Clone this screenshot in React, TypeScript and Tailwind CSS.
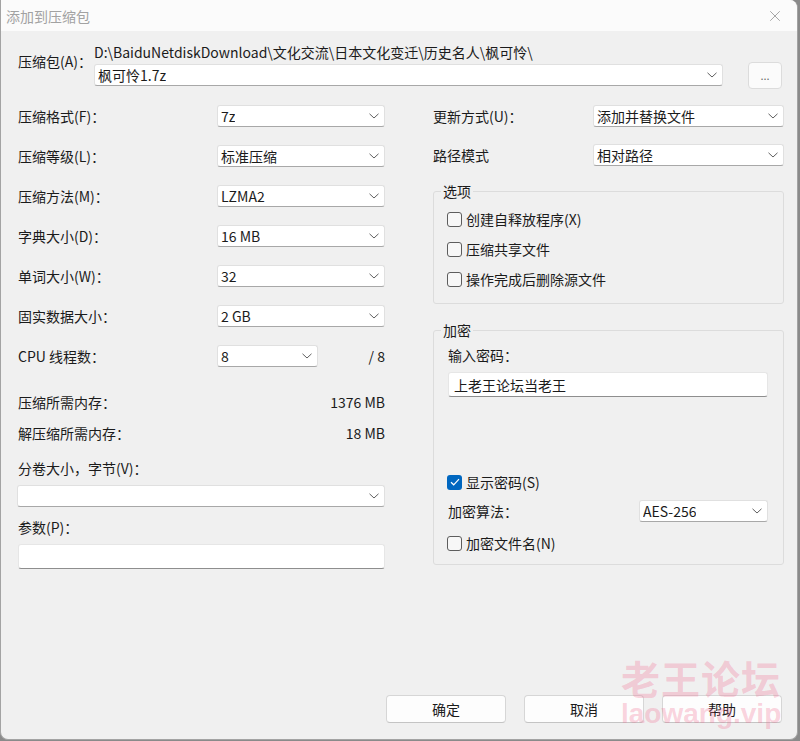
import { X } from "lucide-react";

const ff = "font-['Noto_Sans_CJK_SC','Liberation_Sans',sans-serif]";

function Chevron() {
  return (
    <svg width="10" height="6" viewBox="0 0 10 6" className="shrink-0">
      <path d="M0.5 0.8 L5 5 L9.5 0.8" fill="none" stroke="#5f5f5f" strokeWidth="1" />
    </svg>
  );
}

function Combo({ value, className = "" }: { value?: string; className?: string }) {
  return (
    <div
      className={`h-[22px] bg-white border border-[#e0e0e0] border-b-[#a8a8a8] rounded-[3px] flex items-center justify-between pl-[3px] pr-[5px] ${className}`}
    >
      <span className="text-[14px] leading-[20px] text-[#1b1b1b] truncate">{value}</span>
      <Chevron />
    </div>
  );
}

function Check({ label, checked = false }: { label: string; checked?: boolean }) {
  return (
    <div className="flex items-center h-[20px] gap-[4px]">
      {checked ? (
        <span className="w-[15px] h-[15px] rounded-[3px] bg-[#0067c0] flex items-center justify-center">
          <svg width="10" height="8" viewBox="0 0 10 8">
            <path d="M1 4.2 L3.7 6.8 L9 1.2" fill="none" stroke="white" strokeWidth="1.2" />
          </svg>
        </span>
      ) : (
        <span className="w-[15px] h-[15px] rounded-[3px] border border-[#5d5d5d] bg-[#f7f7f7]" />
      )}
      <span className="text-[14px] leading-[20px] text-[#1b1b1b]">{label}</span>
    </div>
  );
}

function Row({ label, value, labelW }: { label: string; value: string; labelW: string }) {
  return (
    <div className="flex items-center h-[22px]">
      <span className={`${labelW} shrink-0 text-[14px] leading-[20px] text-[#1b1b1b]`}>{label}</span>
      <Combo value={value} className="flex-1" />
    </div>
  );
}

function Btn({ label }: { label: string }) {
  return (
    <button className="w-[120px] h-[28px] bg-[#fdfdfd] border border-[#d6d6d6] border-b-[#c4c4c4] rounded-[4px] text-[14px] text-[#1b1b1b] flex items-center justify-center">
      {label}
    </button>
  );
}

export default function App() {
  return (
    <div className={`w-[800px] h-[741px] bg-[#8a8a8a] ${ff}`}>
      <div className="relative w-[798px] h-[740px] flex flex-col bg-[#f0f0f0] border-l border-r border-b border-[#a3a3a3] rounded-tr-[8px] rounded-b-[8px] overflow-hidden">
        {/* title bar */}
        <div className="h-[31px] bg-[#fbfbfb] flex items-center justify-between pl-[5px] pr-[13px] shrink-0">
          <span className="text-[14px] leading-[20px] text-[#a2a2a2]">添加到压缩包</span>
          <X size={18} strokeWidth={1} className="text-[#8a8a8a]" />
        </div>

        <div className="flex-1 flex flex-col">
          {/* archive */}
          <div className="flex pl-[17px] pt-[12px]">
            <span className="w-[76px] shrink-0 mt-[8px] text-[14px] leading-[20px] text-[#1b1b1b]">压缩包(A)：</span>
            <div className="flex flex-col">
              <span className="text-[14px] leading-[18px] text-[#1b1b1b]">D:\BaiduNetdiskDownload\文化交流\日本文化变迁\历史名人\枫可怜\</span>
              <div className="flex items-start mt-[3px]">
                <Combo value="枫可怜1.7z" className="w-[629px]" />
                <button className="ml-[25px] -mt-[2px] w-[34px] h-[27px] bg-[#fbfbfb] border border-[#dcdcdc] rounded-[4px] text-[11px] leading-none text-[#6a6a6a]">
                  ...
                </button>
              </div>
            </div>
          </div>

          {/* columns */}
          <div className="flex mt-[16px] pl-[17px]">
            {/* left */}
            <div className="w-[367px] flex flex-col">
              <div className="flex flex-col gap-[18px]">
                <Row label="压缩格式(F)：" value="7z" labelW="w-[199px]" />
                <Row label="压缩等级(L)：" value="标准压缩" labelW="w-[199px]" />
                <Row label="压缩方法(M)：" value="LZMA2" labelW="w-[199px]" />
                <Row label="字典大小(D)：" value="16 MB" labelW="w-[199px]" />
                <Row label="单词大小(W)：" value="32" labelW="w-[199px]" />
                <Row label="固实数据大小：" value="2 GB" labelW="w-[199px]" />
                <div className="flex items-center h-[22px]">
                  <span className="w-[199px] shrink-0 text-[14px] leading-[20px] text-[#1b1b1b]">CPU 线程数：</span>
                  <Combo value="8" className="w-[101px]" />
                  <span className="ml-auto text-[14px] leading-[20px] text-[#1b1b1b]">/ 8</span>
                </div>
              </div>
              <div className="flex justify-between mt-[25px] text-[14px] leading-[20px] text-[#1b1b1b]">
                <span>压缩所需内存：</span>
                <span>1376 MB</span>
              </div>
              <div className="flex justify-between mt-[11px] text-[14px] leading-[20px] text-[#1b1b1b]">
                <span>解压缩所需内存：</span>
                <span>18 MB</span>
              </div>
              <span className="mt-[15px] text-[14px] leading-[20px] text-[#1b1b1b]">分卷大小，字节(V)：</span>
              <Combo className="mt-[7px] -ml-[1px]" />
              <span className="mt-[10px] text-[14px] leading-[20px] text-[#1b1b1b]">参数(P)：</span>
              <div className="mt-[7px] h-[25px] bg-white border border-[#e6e6e6] border-b-[#8e8e8e] rounded-[3px]" />
            </div>

            {/* right */}
            <div className="w-[351px] ml-[48px] flex flex-col">
              <div className="flex flex-col gap-[17px]">
                <Row label="更新方式(U)：" value="添加并替换文件" labelW="w-[160px]" />
                <Row label="路径模式" value="相对路径" labelW="w-[160px]" />
              </div>

              <fieldset className="mt-[13px] border border-[#dcdcdc] rounded-[3px] pl-[13px] pr-[15px] pt-[6px] pb-[14px]">
                <legend className="ml-[-6px] px-[2px] text-[14px] leading-[24px] text-[#1b1b1b]">选项</legend>
                <div className="flex flex-col gap-[10px]">
                  <Check label="创建自释放程序(X)" />
                  <Check label="压缩共享文件" />
                  <Check label="操作完成后删除源文件" />
                </div>
              </fieldset>

              <fieldset className="mt-[14px] border border-[#dcdcdc] rounded-[3px] pl-[14px] pr-[15px] pt-[3px] pb-[11px] flex flex-col">
                <legend className="ml-[-7px] px-[2px] text-[14px] leading-[24px] text-[#1b1b1b]">加密</legend>
                <span className="text-[14px] leading-[20px] text-[#1b1b1b]">输入密码：</span>
                <div className="mt-[7px] h-[25px] bg-white border border-[#e6e6e6] border-b-[#8e8e8e] rounded-[3px] flex items-center pl-[5px]">
                  <span className="text-[14px] leading-[20px] text-[#1b1b1b]">上老王论坛当老王</span>
                </div>
                <div className="mt-[75px] -ml-[1px]">
                  <Check label="显示密码(S)" checked />
                </div>
                <div className="mt-[8px] flex items-center h-[22px]">
                  <span className="w-[191px] shrink-0 text-[14px] leading-[20px] text-[#1b1b1b]">加密算法：</span>
                  <Combo value="AES-256" className="flex-1" />
                </div>
                <div className="mt-[11px] -ml-[1px]">
                  <Check label="加密文件名(N)" />
                </div>
              </fieldset>
            </div>
          </div>

          {/* buttons */}
          <div className="mt-auto mb-[16px] flex justify-end gap-[18px] pr-[15px]">
            <Btn label="确定" />
            <Btn label="取消" />
            <Btn label="帮助" />
          </div>
        </div>

        {/* watermark */}
        <div className="absolute left-[620px] top-[655px] flex flex-col items-center pointer-events-none text-[rgba(240,110,145,0.3)] font-bold">
          <span className="text-[39px] leading-[44px] tracking-[1px]">老王论坛</span>
          <span className="font-['Liberation_Sans',sans-serif] text-[28px] leading-[30px]">laowang.vip</span>
        </div>
      </div>
    </div>
  );
}
